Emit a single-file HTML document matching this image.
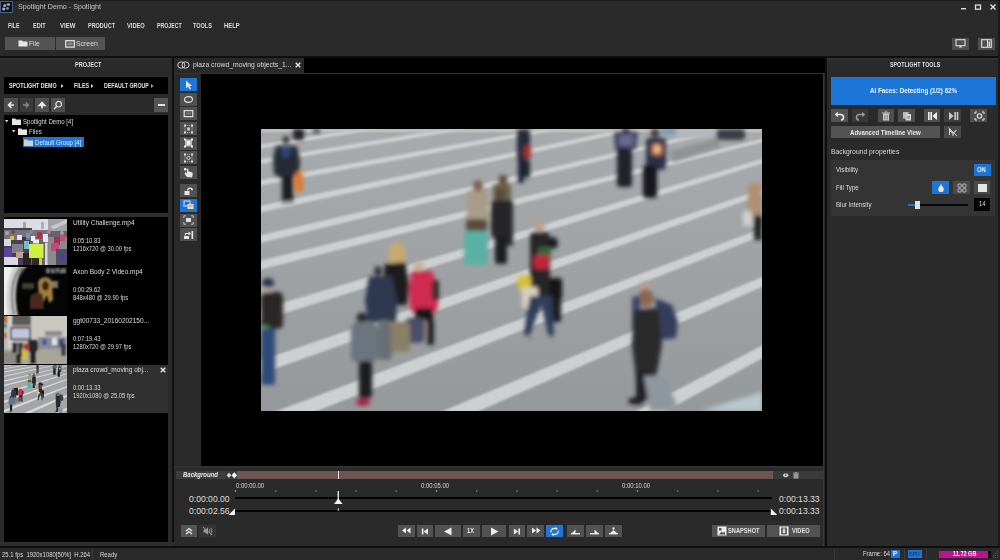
<!DOCTYPE html>
<html><head><meta charset="utf-8">
<style>
*{margin:0;padding:0;box-sizing:border-box}
html,body{width:1000px;height:560px;overflow:hidden;background:#2a2a2a;font-family:"Liberation Sans",sans-serif;color:#ddd;position:relative}
.a{position:absolute}
.b{position:absolute;background:#505050}
.k{position:absolute;background:#000}
.t{position:absolute;white-space:nowrap;line-height:1;transform-origin:0 50%}
svg{position:absolute;overflow:visible}
</style></head><body>
<!-- ===== TITLE BAR ===== -->
<div class="a" style="left:0;top:0;width:1000px;height:1.2px;background:#1c1c1c"></div>
<div class="a" style="left:0;top:58px;width:172px;height:1.5px;background:#303030"></div>
<div class="a" style="left:827px;top:58px;width:171px;height:1.5px;background:#303030"></div>
<div class="a" style="left:0;top:1px;width:13px;height:12px;background:#151310;border:1px solid #43617e"></div>
<svg style="left:0;top:0" width="13" height="13"><g filter="url(#icb)"><circle cx="4.7" cy="5.5" r="1.5" fill="#9aa8c8"/><ellipse cx="8.4" cy="4.6" rx="1.8" ry="1.4" fill="#5cbcf0"/><circle cx="3.8" cy="9" r="1.6" fill="#a8b0d0"/><circle cx="7.5" cy="8.3" r="1.4" fill="#8a90b0"/></g><defs><filter id="icb"><feGaussianBlur stdDeviation="0.5"/></filter></defs></svg>
<div class="t" style="left:18px;top:3px;font-size:7.6px;color:#c4c4c4;transform:scaleX(0.94)">Spotlight Demo - Spotlight</div>
<svg style="left:960px;top:3px" width="40" height="9">
 <rect x="1" y="5" width="5" height="1.4" fill="#ddd"/>
 <rect x="15.5" y="2" width="5" height="4.2" fill="none" stroke="#ddd" stroke-width="1.3"/>
 <path d="M30.5 1.5 L35.5 6.5 M35.5 1.5 L30.5 6.5" stroke="#ddd" stroke-width="1.4"/>
</svg>
<!-- ===== MENU ===== -->
<div class="t" style="left:8px;top:22.5px;font-size:6.5px;font-weight:bold;color:#dcdcdc;transform:scaleX(0.82)">FILE</div>
<div class="t" style="left:33px;top:22.5px;font-size:6.5px;font-weight:bold;color:#dcdcdc;transform:scaleX(0.85)">EDIT</div>
<div class="t" style="left:60px;top:22.5px;font-size:6.5px;font-weight:bold;color:#dcdcdc;transform:scaleX(0.92)">VIEW</div>
<div class="t" style="left:88px;top:22.5px;font-size:6.5px;font-weight:bold;color:#dcdcdc;transform:scaleX(0.84)">PRODUCT</div>
<div class="t" style="left:127px;top:22.5px;font-size:6.5px;font-weight:bold;color:#dcdcdc;transform:scaleX(0.88)">VIDEO</div>
<div class="t" style="left:157px;top:22.5px;font-size:6.5px;font-weight:bold;color:#dcdcdc;transform:scaleX(0.8)">PROJECT</div>
<div class="t" style="left:192.5px;top:22.5px;font-size:6.5px;font-weight:bold;color:#dcdcdc;transform:scaleX(0.85)">TOOLS</div>
<div class="t" style="left:223.5px;top:22.5px;font-size:6.5px;font-weight:bold;color:#dcdcdc;transform:scaleX(0.9)">HELP</div>
<!-- ===== TOOLBAR ===== -->
<div class="b" style="left:5px;top:37px;width:50px;height:13px;background:#535353"></div>
<svg style="left:18px;top:40px" width="10" height="7"><path d="M0.5 0.5h3.5l1 1h4.5v5h-9z" fill="#e6e6e6"/></svg>
<div class="t" style="left:28.5px;top:39.5px;font-size:7.5px;color:#dadada;transform:scaleX(0.9)">File</div>
<div class="b" style="left:56px;top:37px;width:49px;height:13px;background:#535353"></div>
<svg style="left:65px;top:40px" width="10" height="8"><rect x="0.7" y="0.7" width="8.6" height="6.4" fill="none" stroke="#e0e0e0" stroke-width="1.3"/><rect x="2.5" y="2.5" width="5" height="2.8" fill="#888"/></svg>
<div class="t" style="left:75.5px;top:39.5px;font-size:7.5px;color:#dadada;transform:scaleX(0.92)">Screen</div>
<div class="b" style="left:952px;top:37.5px;width:17px;height:12.5px;background:#4e4e4e"></div>
<svg style="left:955px;top:39px" width="11" height="9"><rect x="1" y="0.7" width="9" height="6" fill="none" stroke="#ddd" stroke-width="1.1"/><path d="M3.5 8.5h4l-2-2z" fill="#ddd"/></svg>
<div class="b" style="left:978px;top:37.5px;width:17px;height:12.5px;background:#4e4e4e"></div>
<svg style="left:981px;top:39px" width="11" height="9"><rect x="0.7" y="0.7" width="9.6" height="7.6" fill="none" stroke="#ddd" stroke-width="1.1"/><path d="M6.5 0.7v7.6" stroke="#ddd" stroke-width="1"/><rect x="7.6" y="2.5" width="1.5" height="5" fill="#ddd"/></svg>
<div class="a" style="left:0;top:56px;width:1000px;height:2px;background:#0f0f0f"></div>
<!-- ===== LEFT PANEL ===== -->
<div class="a" style="left:172px;top:58px;width:2px;height:488px;background:#0f0f0f"></div>
<div class="t" style="left:75px;top:61.5px;font-size:6.5px;font-weight:bold;color:#dedede;transform:scaleX(0.86)">PROJECT</div>
<div class="k" style="left:4px;top:77px;width:164px;height:17px"></div>
<div class="t" style="left:9px;top:83px;font-size:6.3px;font-weight:bold;color:#e0e0e0;transform:scaleX(0.84)">SPOTLIGHT DEMO</div>
<svg style="left:60.5px;top:84px" width="3" height="4"><path d="M0 0L2.5 2L0 4z" fill="#ccc"/></svg>
<div class="t" style="left:74px;top:83px;font-size:6.3px;font-weight:bold;color:#e0e0e0;transform:scaleX(0.84)">FILES</div>
<svg style="left:90.5px;top:84px" width="3" height="4"><path d="M0 0L2.5 2L0 4z" fill="#ccc"/></svg>
<div class="t" style="left:103.5px;top:83px;font-size:6.3px;font-weight:bold;color:#e0e0e0;transform:scaleX(0.84)">DEFAULT GROUP</div>
<svg style="left:150.5px;top:84px" width="3" height="4"><path d="M0 0L2.5 2L0 4z" fill="#aaa"/></svg>
<!-- nav buttons -->
<div class="b" style="left:4px;top:98px;width:14px;height:14px;background:#4f4f4f"></div>
<svg style="left:6px;top:100px" width="10" height="10"><path d="M8 5H3M5.5 2.2L2.5 5l3 2.8" stroke="#e8e8e8" stroke-width="1.6" fill="none"/></svg>
<div class="b" style="left:19.5px;top:98px;width:13.5px;height:14px;background:#3b3b3b"></div>
<svg style="left:21px;top:100px" width="10" height="10"><path d="M2 5H7M4.8 2.6L7.4 5l-2.6 2.4" stroke="#8a8a8a" stroke-width="1.3" fill="none"/></svg>
<div class="b" style="left:35px;top:98px;width:14px;height:14px;background:#4f4f4f"></div>
<svg style="left:37px;top:100px" width="10" height="10"><path d="M5 8.5V3.5M2.2 5.5L5 2.5l2.8 3z" stroke="#e8e8e8" stroke-width="1.6" fill="#e8e8e8"/></svg>
<div class="b" style="left:51px;top:98px;width:14px;height:14px;background:#4f4f4f"></div>
<svg style="left:53px;top:100px" width="10" height="10"><circle cx="5.7" cy="4.2" r="2.8" stroke="#e0e0e0" stroke-width="1.2" fill="none"/><path d="M3.7 6.3L1.2 8.9" stroke="#e0e0e0" stroke-width="1.5"/></svg>
<div class="b" style="left:154px;top:98px;width:14px;height:14px;background:#555"></div>
<div class="a" style="left:157.5px;top:104.3px;width:7px;height:1.6px;background:#e0e0e0"></div>
<!-- tree -->
<div class="k" style="left:4px;top:115px;width:164px;height:97.5px"></div>
<svg style="left:5px;top:119.5px" width="4" height="3"><path d="M0 0h3.4L1.7 2.4z" fill="#ddd"/></svg>
<svg style="left:11.5px;top:118px" width="9" height="7"><path d="M0 0.5h3.2l0.8 1h5v5.5h-9z" fill="#e8e8e8"/></svg>
<div class="t" style="left:22.5px;top:117.5px;font-size:7px;color:#dadada;transform:scaleX(0.87)">Spotlight Demo [4]</div>
<svg style="left:12px;top:129.5px" width="4" height="3"><path d="M0 0h3.4L1.7 2.4z" fill="#ddd"/></svg>
<svg style="left:18px;top:128px" width="9" height="7"><path d="M0 0.5h3.2l0.8 1h5v5.5h-9z" fill="#e8e8e8"/></svg>
<div class="t" style="left:29px;top:127.5px;font-size:7px;color:#dadada;transform:scaleX(0.87)">Files</div>
<div class="a" style="left:23px;top:136.5px;width:61px;height:10.5px;background:#1c76d8"></div>
<svg style="left:24px;top:138.5px" width="9" height="7"><path d="M0 0.5h3.2l0.8 1h5v5.5h-9z" fill="#d6d0c4"/></svg>
<div class="t" style="left:35px;top:138.5px;font-size:7px;color:#e8e8e8;transform:scaleX(0.87)">Default Group [4]</div>
<div class="a" style="left:4px;top:212.5px;width:164px;height:4.5px;background:#2e2e2e"></div>
<!-- list -->
<div class="k" style="left:4px;top:217px;width:164px;height:325px"></div>
<div class="a" style="left:4px;top:365px;width:164px;height:48px;background:#303030"></div>
<!-- thumb 1 -->
<svg style="left:4px;top:219px" width="63" height="46" viewBox="0 0 63 46">
 <defs><filter id="bl1" x="-10%" y="-10%" width="120%" height="120%"><feGaussianBlur stdDeviation="0.7"/></filter><clipPath id="c1"><rect width="63" height="46"/></clipPath></defs>
 <g clip-path="url(#c1)"><rect width="63" height="46" fill="#6a6070"/>
 <g filter="url(#bl1)">
 <rect x="-2" y="-2" width="48" height="13" fill="#dadee4"/>
 <rect x="44" y="-2" width="21" height="14" fill="#a0a4a8"/>
 <path d="M46 8L63 0V4L50 10z" fill="#c4c8cc"/>
 <rect x="19" y="3" width="3" height="7" fill="#a0a6ac"/><rect x="37" y="3" width="3" height="7" fill="#aab0b4"/>
 <rect x="-2" y="9" width="30" height="3" fill="#3a4a38"/>
 <rect x="-2" y="11" width="46" height="10" fill="#7a7080"/>
 <rect x="41" y="18" width="24" height="30" fill="#8a8a8e"/>
 <rect x="41" y="24" width="2.5" height="24" fill="#d8d8d8"/>
 <circle cx="3" cy="14" r="2" fill="#b0a0b0"/><circle cx="9" cy="13" r="1.8" fill="#604858"/><circle cx="27" cy="13" r="1.8" fill="#9a8090"/><circle cx="45" cy="13" r="2" fill="#b08098"/><circle cx="58" cy="14" r="2" fill="#c090a8"/>
 <rect x="13" y="16" width="5" height="7" fill="#e0e0e8"/><rect x="39" y="15" width="5" height="8" fill="#e4e4ec"/>
 <rect x="33" y="13" width="5" height="7" fill="#b03040"/><rect x="50" y="18" width="6" height="8" fill="#a03058"/><rect x="56" y="16" width="5" height="6" fill="#c05070"/>
 <rect x="6" y="17" width="4" height="5" fill="#d0c040"/><rect x="22" y="14" width="4" height="5" fill="#60a0c0"/><rect x="18" y="18" width="4" height="5" fill="#403038"/><rect x="27" y="17" width="4" height="5" fill="#f0f0f0"/>
 <rect x="-2" y="21" width="28" height="25" fill="#4a4050"/>
 <rect x="0" y="20" width="7" height="7" fill="#d8d8e0"/>
 <rect x="8" y="25" width="11" height="9" fill="#80808a"/>
 <rect x="-2" y="29" width="10" height="9" fill="#6040a0"/>
 <rect x="-2" y="38" width="16" height="10" fill="#d8d8e0"/>
 <rect x="12" y="33" width="8" height="6" fill="#c0a090"/>
 <rect x="19" y="34" width="8" height="12" fill="#2a2028"/>
 <rect x="20" y="22" width="5" height="8" fill="#70c0c8"/>
 <rect x="25" y="25" width="14.5" height="14" fill="#d0f040"/>
 <rect x="29" y="20.5" width="6" height="4" fill="#e8e8e8"/>
 <rect x="28" y="39" width="9" height="7" fill="#302a28"/>
 <rect x="35" y="38" width="3" height="8" fill="#c0d040"/>
 <rect x="47" y="24" width="8" height="8" fill="#c04880"/>
 <rect x="52" y="30" width="11" height="16" fill="#505060"/>
 <rect x="55" y="35" width="7" height="6" fill="#5040a0"/>
 </g></g>
</svg>
<div class="t" style="left:72.5px;top:219px;font-size:7px;color:#dedede;transform:scaleX(0.93)">Utility Challenge.mp4</div>
<div class="t" style="left:72.5px;top:238px;font-size:6.3px;color:#dadada;transform:scaleX(0.92)">0:05:10.83</div>
<div class="t" style="left:72.5px;top:246px;font-size:6.3px;color:#dadada;transform:scaleX(0.92)">1216x720 @ 30.00 fps</div>
<!-- thumb 2 -->
<svg style="left:4px;top:267px" width="63" height="48" viewBox="0 0 63 48">
 <defs><filter id="bl2" x="-10%" y="-10%" width="120%" height="120%"><feGaussianBlur stdDeviation="0.8"/></filter><clipPath id="c2"><rect width="63" height="48"/></clipPath></defs>
 <g clip-path="url(#c2)"><rect width="63" height="48" fill="#050505"/>
 <g filter="url(#bl2)">
 <path d="M-2 -2H24C13 8 9 26 14 50H-2z" fill="#d0d0d0"/>
 <path d="M-2 -2H10C3 10 1 30 4 50H-2z" fill="#f0f0f0"/>
 <path d="M17 0C8 10 6 28 10 48" stroke="#707070" stroke-width="2.2" fill="none"/>
 <path d="M20 0C12 10 10 28 14 48" stroke="#2a2a2a" stroke-width="1.6" fill="none"/>
 <rect x="18" y="16" width="12" height="6" fill="#3a4034"/>
 <rect x="46" y="14" width="8" height="7" fill="#7a7a68"/>
 <path d="M34 16C35 9 46 8 48 15L49 33L45 36L43 28L39 36L35 30z" fill="#a08040"/>
 <ellipse cx="41.5" cy="19" rx="3.5" ry="5" fill="#3a2418"/>
 <path d="M26 30C29 25 36 24 39 28L40 42H26z" fill="#4a2a1e"/>
 <g fill="#e0e0e0"><rect x="42" y="1.8" width="4" height="1.3"/><rect x="47" y="1.8" width="3" height="1.3"/><rect x="51" y="1.8" width="5" height="1.3"/><rect x="57" y="1.8" width="5" height="1.3"/><rect x="42" y="4.4" width="4" height="1.3"/><rect x="47" y="4.4" width="4" height="1.3"/><rect x="52" y="4.4" width="2" height="1.3"/><rect x="55" y="4.4" width="7" height="1.3"/></g>
 </g></g>
</svg>
<div class="t" style="left:72.5px;top:267.5px;font-size:7px;color:#dedede;transform:scaleX(0.93)">Axon Body 2 Video.mp4</div>
<div class="t" style="left:72.5px;top:286.5px;font-size:6.3px;color:#dadada;transform:scaleX(0.92)">0:00:29.62</div>
<div class="t" style="left:72.5px;top:294.5px;font-size:6.3px;color:#dadada;transform:scaleX(0.92)">848x480 @ 29.90 fps</div>
<!-- thumb 3 -->
<svg style="left:4px;top:316px" width="63" height="48" viewBox="0 0 63 48">
 <defs><filter id="bl3" x="-10%" y="-10%" width="120%" height="120%"><feGaussianBlur stdDeviation="0.8"/></filter><clipPath id="c3"><rect width="63" height="48"/></clipPath></defs>
 <g clip-path="url(#c3)"><rect width="63" height="48" fill="#b8b6ac"/>
 <g filter="url(#bl3)">
 <rect x="27" y="-2" width="38" height="24" fill="#c8c8c0"/>
 <rect x="8" y="-2" width="19" height="13" fill="#5a5a58"/>
 <rect x="8" y="9" width="19" height="4" fill="#a89a88"/>
 <rect x="-2" y="-2" width="7" height="9" fill="#c07030"/>
 <rect x="-2" y="8" width="5" height="4" fill="#4080b0"/><rect x="-2" y="12" width="5" height="3" fill="#c0c040"/><rect x="-2" y="17" width="5" height="5" fill="#c06080"/>
 <rect x="3.5" y="-2" width="4.5" height="37" fill="#d0d0d0"/>
 <rect x="6" y="11" width="21" height="13" fill="#303030"/>
 <rect x="7.5" y="12.5" width="18" height="10" fill="#c0c8e0"/>
 <rect x="41" y="15" width="17" height="5" fill="#8a8a90"/>
 <rect x="34" y="21" width="29" height="12" fill="#8a8a98"/>
 <rect x="38" y="23" width="5" height="6" fill="#4060a0"/><rect x="48" y="22" width="5" height="7" fill="#e0e0e8"/><rect x="55" y="23" width="5" height="8" fill="#404a70"/>
 <rect x="-2" y="33" width="67" height="17" fill="#a8a498"/>
 <rect x="-2" y="36" width="14" height="12" fill="#8a8880"/>
 <rect x="8" y="27" width="5" height="10" fill="#303034"/><rect x="14" y="27" width="5" height="14" fill="#383c48"/>
 <rect x="12" y="38" width="5" height="10" fill="#282828"/>
 <rect x="18" y="33" width="5" height="11" fill="#d0c030"/>
 <rect x="24" y="24" width="10" height="12" fill="#28282c" rx="3"/><rect x="26" y="35" width="6" height="13" fill="#202024"/>
 <rect x="20" y="28" width="5" height="6" fill="#b03030"/>
 <rect x="57" y="28" width="5" height="12" fill="#404048"/>
 </g></g>
</svg>
<div class="t" style="left:72.5px;top:317px;font-size:7px;color:#dedede;transform:scaleX(0.93)">ggt00733_20160202150...</div>
<div class="t" style="left:72.5px;top:335.5px;font-size:6.3px;color:#dadada;transform:scaleX(0.92)">0:07:19.43</div>
<div class="t" style="left:72.5px;top:343.5px;font-size:6.3px;color:#dadada;transform:scaleX(0.92)">1280x720 @ 29.97 fps</div>
<!-- thumb 4 -->
<svg style="left:4px;top:365px;overflow:hidden" width="63" height="48" viewBox="62.6 0 375.8 282" preserveAspectRatio="none">
<defs><filter id="tvb" x="-5%" y="-5%" width="110%" height="110%"><feGaussianBlur stdDeviation="2.5"/></filter>
<clipPath id="tvc"><rect width="501" height="282"/></clipPath></defs>
<g clip-path="url(#tvc)">
<rect width="501" height="282" fill="#a3a6a8"/>
<g fill="#d8dada" filter="url(#tvb)"><path d="M-10 17.2 L511 -68.1 L511 -65.1 L-10 21.1Z"/><path d="M-10 31.9 L511 -54.2 L511 -51.2 L-10 36.4Z"/><path d="M-10 52.9 L511 -42.4 L511 -39.4 L-10 58.4Z"/><path d="M-10 78.8 L511 -31.7 L511 -28.7 L-10 85.5Z"/><path d="M-10 108.4 L511 -12.9 L511 -9.9 L-10 116.3Z"/><path d="M-10 133.9 L511 7.4 L511 10.8 L-10 143.0Z"/><path d="M-10 183.4 L511 27.0 L511 31.3 L-10 194.7Z"/><path d="M-10 234.7 L511 56.7 L511 62.3 L-10 248.3Z"/><path d="M-10 291.8 L511 95.5 L511 102.8 L-10 307.9Z"/><path d="M-10 362.6 L511 143.9 L511 153.5 L-10 382.0Z"/><path d="M-10 483.9 L511 211.4 L511 223.9 L-10 508.8Z"/><path d="M-10 622.0 L511 288.4 L511 304.5 L-10 653.1Z"/></g>
<g filter="url(#tvb)"><ellipse cx="25.0" cy="11.0" rx="3.5" ry="4" fill="#3a3434"/><path d="M15.0 17.0 L36.0 17.0 L39.0 31.0 L38.0 47.0 L32.0 49.0 L20.0 49.0 L13.0 45.0 L12.0 29.0Z" fill="#262a34"/><rect x="21.0" y="18.0" width="8.0" height="10.0" rx="2" fill="#2c4a78"/><rect x="21.0" y="47.0" width="11.0" height="28.0" rx="2" fill="#1e1e22"/><rect x="34.0" y="43.0" width="8.0" height="20.0" rx="3" fill="#e07a2a"/><ellipse cx="27.0" cy="75.0" rx="6" ry="2.5" fill="#b8baba"/><rect x="32.0" y="0.0" width="11.0" height="11.0" rx="3" fill="#222226"/><rect x="52.0" y="0.0" width="7.0" height="4.0" rx="1" fill="#3a3a40"/><rect x="256.0" y="0.0" width="13.0" height="31.0" rx="4" fill="#262c3c"/><rect x="263.0" y="17.0" width="7.0" height="12.0" rx="2" fill="#a03028"/><rect x="257.0" y="29.0" width="6.0" height="25.0" rx="2" fill="#1e2230"/><rect x="263.0" y="31.0" width="6.0" height="18.0" rx="2" fill="#222636"/><ellipse cx="365.0" cy="2.0" rx="4" ry="3" fill="#303030"/><path d="M353.0 3.0 L377.0 3.0 L375.0 20.0 L354.0 20.0Z" fill="#3a4060"/><rect x="358.0" y="6.0" width="14.0" height="11.0" rx="2" fill="#6a6a90"/><rect x="356.0" y="19.0" width="15.0" height="39.0" rx="3" fill="#22242c"/><ellipse cx="394.0" cy="4.0" rx="4.5" ry="4.5" fill="#4a3a40"/><rect x="385.0" y="9.0" width="20.0" height="32.0" rx="4" fill="#2a3248"/><rect x="391.0" y="15.0" width="10.0" height="11.0" rx="2" fill="#d88040"/><rect x="394.0" y="17.0" width="4.0" height="6.0" rx="1" fill="#e8d0c0"/><rect x="382.0" y="36.0" width="14.0" height="33.0" rx="3" fill="#18181c"/><rect x="400.0" y="0.0" width="16.0" height="4.0" rx="1" fill="#5090c0"/><path d="M407.0 23.0 L455.0 9.0 L461.0 17.0 L413.0 33.0Z" fill="#8e9294"/><rect x="415.0" y="0.0" width="41.0" height="9.0" rx="3" fill="#b4b8bc"/><rect x="455.0" y="0.0" width="29.0" height="11.0" rx="4" fill="#3a3e44"/><rect x="487.0" y="54.0" width="14.0" height="34.0" rx="5" fill="#b09070"/><rect x="493.0" y="86.0" width="8.0" height="25.0" rx="2" fill="#202022"/><rect x="482.0" y="82.0" width="9.0" height="15.0" rx="3" fill="#d0d0d0"/><ellipse cx="217.0" cy="57.0" rx="5" ry="6" fill="#7a6050"/><path d="M207.0 62.0 L227.0 62.0 L228.0 91.0 L205.0 91.0Z" fill="#a89c88"/><rect x="205.0" y="90.0" width="21.0" height="13.0" rx="3" fill="#5a4a3a"/><rect x="203.0" y="102.0" width="24.0" height="34.0" rx="3" fill="#5ab0a4"/><ellipse cx="242.0" cy="51.0" rx="4.5" ry="5.5" fill="#605040"/><rect x="232.0" y="55.0" width="18.0" height="17.0" rx="4" fill="#6a6048"/><rect x="246.0" y="71.0" width="6.0" height="46.0" rx="2" fill="#2a2a2a"/><ellipse cx="239.0" cy="65.0" rx="4.5" ry="6" fill="#5a4838"/><rect x="230.0" y="71.0" width="20.0" height="38.0" rx="5" fill="#26282c"/><rect x="234.0" y="107.0" width="12.0" height="28.0" rx="3" fill="#1e1e22"/><ellipse cx="278.5" cy="97.0" rx="5.5" ry="6.5" fill="#b8a090"/><rect x="269.0" y="103.0" width="20.0" height="66.0" rx="5" fill="#262628"/><ellipse cx="292.0" cy="114.0" rx="5" ry="6" fill="#1e1e20"/><rect x="277.0" y="118.0" width="13.0" height="11.0" rx="2" fill="#3a6040"/><rect x="273.0" y="126.0" width="15.0" height="14.0" rx="3" fill="#c02838"/><rect x="288.0" y="149.0" width="13.0" height="22.0" rx="3" fill="#161618"/><rect x="291.0" y="169.0" width="9.0" height="24.0" rx="2" fill="#1e1e22"/><rect x="257.0" y="147.0" width="13.0" height="15.0" rx="3" fill="#d8c030"/><rect x="261.0" y="158.0" width="16.0" height="21.0" rx="3" fill="#d8d0c0"/><path d="M269.0 167.0 L284.0 167.0 L274.0 191.0 L269.0 207.0 L263.0 207.0 L265.0 189.0Z" fill="#2e3e5a"/><path d="M279.0 167.0 L291.0 167.0 L293.0 207.0 L288.0 209.0 L283.0 187.0Z" fill="#2e3e5a"/><ellipse cx="268.0" cy="209.0" rx="5" ry="2.5" fill="#909498"/><ellipse cx="291.0" cy="209.0" rx="4" ry="2" fill="#909498"/><ellipse cx="136.0" cy="126.0" rx="8.5" ry="13" fill="#c8a870"/><path d="M124.0 135.0 L144.0 133.0 L148.0 156.0 L146.0 176.0 L124.0 176.0 L121.0 156.0Z" fill="#1c1c1e"/><ellipse cx="158.0" cy="137.0" rx="5" ry="5" fill="#c8b090"/><path d="M151.0 142.0 L171.0 142.0 L178.0 161.0 L176.0 183.0 L150.0 183.0 L148.0 161.0Z" fill="#d02a50"/><rect x="171.0" y="151.0" width="7.0" height="20.0" rx="2" fill="#2a2a2a"/><rect x="154.0" y="179.0" width="18.0" height="13.0" rx="3" fill="#141414"/><rect x="159.0" y="191.0" width="6.0" height="20.0" rx="2" fill="#c0a090"/><rect x="166.0" y="191.0" width="7.0" height="25.0" rx="2" fill="#222222"/><rect x="144.0" y="189.0" width="20.0" height="25.0" rx="5" fill="#4a5068"/><ellipse cx="117.0" cy="142.0" rx="4" ry="5" fill="#353535"/><path d="M108.0 147.0 L131.0 147.0 L136.0 171.0 L135.0 193.0 L107.0 193.0 L104.0 171.0Z" fill="#2e3850"/><rect x="117.0" y="191.0" width="14.0" height="40.0" rx="4" fill="#6a6e74"/><rect x="130.0" y="193.0" width="19.0" height="30.0" rx="4" fill="#8a8068"/><ellipse cx="101.0" cy="189.0" rx="5.5" ry="5.5" fill="#2a2a2a"/><rect x="90.0" y="193.0" width="27.0" height="41.0" rx="7" fill="#6a7480"/><rect x="98.0" y="232.0" width="13.0" height="37.0" rx="3" fill="#1a1a1e"/><ellipse cx="102.0" cy="273.0" rx="7" ry="4" fill="#a02848"/><ellipse cx="7.0" cy="154.0" rx="6" ry="5" fill="#2a3450"/><rect x="0.0" y="159.0" width="10.0" height="7.0" rx="2" fill="#c0b0a0"/><rect x="0.0" y="163.0" width="22.0" height="37.0" rx="5" fill="#2a2828"/><rect x="1.0" y="197.0" width="7.0" height="13.0" rx="2" fill="#60b040"/><rect x="0.0" y="199.0" width="14.0" height="57.0" rx="3" fill="#2e4a78"/><ellipse cx="384.0" cy="158.0" rx="5" ry="5" fill="#b8a090"/><ellipse cx="385.0" cy="169.0" rx="8" ry="9" fill="#8a6850"/><path d="M394.0 169.0 L411.0 176.0 L417.0 193.0 L415.0 209.0 L399.0 211.0Z" fill="#343e5c"/><rect x="371.0" y="167.0" width="8.0" height="34.0" rx="3" fill="#3a4868"/><path d="M373.0 181.0 L397.0 179.0 L401.0 216.0 L395.0 249.0 L375.0 249.0 L371.0 216.0Z" fill="#2a2a2c"/><rect x="375.0" y="243.0" width="14.0" height="28.0" rx="3" fill="#222226"/><path d="M383.0 247.0 L403.0 247.0 L416.0 276.0 L411.0 282.0 L389.0 282.0Z" fill="#8e969e"/><ellipse cx="375.0" cy="272.0" rx="8" ry="3.5" fill="#1a1a1a"/><path d="M439.0 282.0 L501.0 263.0 L501.0 282.0Z" fill="#b8c8cc"/></g>
</g></svg>
<div class="t" style="left:72.5px;top:366px;font-size:7px;color:#dedede;transform:scaleX(0.93)">plaza crowd_moving obj...</div>
<svg style="left:159.5px;top:367px" width="6" height="6"><path d="M0.7 0.7L5.3 5.3M5.3 0.7L0.7 5.3" stroke="#e8e8e8" stroke-width="1.3"/></svg>
<div class="t" style="left:72.5px;top:385px;font-size:6.3px;color:#dadada;transform:scaleX(0.92)">0:00:13.33</div>
<div class="t" style="left:72.5px;top:393px;font-size:6.3px;color:#dadada;transform:scaleX(0.92)">1920x1080 @ 25.05 fps</div>
<!-- ===== CENTER ===== -->
<div class="k" style="left:174px;top:58px;width:651px;height:15px"></div>
<div class="a" style="left:174px;top:58px;width:130px;height:15px;background:#292929"></div>
<svg style="left:177px;top:61px" width="13" height="8"><ellipse cx="4.3" cy="4" rx="3.6" ry="3.2" fill="none" stroke="#d0d0d0" stroke-width="1"/><ellipse cx="8.5" cy="4" rx="3.6" ry="3.2" fill="none" stroke="#d0d0d0" stroke-width="1"/></svg>
<div class="t" style="left:193px;top:60.5px;font-size:7.3px;color:#dadada;transform:scaleX(0.93)">plaza crowd_moving objects_1...</div>
<svg style="left:295px;top:61.5px" width="6" height="6"><path d="M0.7 0.7L5.3 5.3M5.3 0.7L0.7 5.3" stroke="#e8e8e8" stroke-width="1.3"/></svg>
<div class="a" style="left:174px;top:73px;width:651px;height:1px;background:#333"></div>
<div class="k" style="left:201px;top:74px;width:622px;height:392px"></div>
<div class="a" style="left:823px;top:73px;width:1.4px;height:473px;background:#3a3a3a"></div>
<div class="a" style="left:825px;top:58px;width:2px;height:488px;background:#0f0f0f"></div>
<!-- VIDEO START --><svg style="left:261px;top:129px" width="501" height="282" viewBox="0 0 501 282">
<defs><filter id="vb" x="-5%" y="-5%" width="110%" height="110%"><feGaussianBlur stdDeviation="1.0"/></filter>
<filter id="vb2" x="-20%" y="-20%" width="140%" height="140%"><feGaussianBlur stdDeviation="1.9"/></filter>
<clipPath id="vc"><rect width="501" height="282"/></clipPath>
<linearGradient id="vg" x1="0" y1="0" x2="0" y2="1"><stop offset="0" stop-color="#a8abad"/><stop offset="1" stop-color="#95999c"/></linearGradient></defs>
<g clip-path="url(#vc)">
<rect width="501" height="282" fill="url(#vg)"/>
<g fill="#cdd0d0" filter="url(#vb)"><path d="M-10 17.2 L511 -68.1 L511 -65.1 L-10 21.1Z"/><path d="M-10 31.9 L511 -54.2 L511 -51.2 L-10 36.4Z"/><path d="M-10 52.9 L511 -42.4 L511 -39.4 L-10 58.4Z"/><path d="M-10 78.8 L511 -31.7 L511 -28.7 L-10 85.5Z"/><path d="M-10 108.4 L511 -12.9 L511 -9.9 L-10 116.3Z"/><path d="M-10 133.9 L511 7.4 L511 10.8 L-10 143.0Z"/><path d="M-10 183.4 L511 27.0 L511 31.3 L-10 194.7Z"/><path d="M-10 234.7 L511 56.7 L511 62.3 L-10 248.3Z"/><path d="M-10 291.8 L511 95.5 L511 102.8 L-10 307.9Z"/><path d="M-10 362.6 L511 143.9 L511 153.5 L-10 382.0Z"/><path d="M-10 483.9 L511 211.4 L511 223.9 L-10 508.8Z"/><path d="M-10 622.0 L511 288.4 L511 304.5 L-10 653.1Z"/></g>
<rect x="0" y="0" width="501" height="3" fill="#c8c4be" filter="url(#vb)"/>
<g filter="url(#vb2)"><ellipse cx="25.0" cy="11.0" rx="3.5" ry="4" fill="#3a3434"/><path d="M15.0 17.0 L36.0 17.0 L39.0 31.0 L38.0 47.0 L32.0 49.0 L20.0 49.0 L13.0 45.0 L12.0 29.0Z" fill="#262a34"/><rect x="21.0" y="18.0" width="8.0" height="10.0" rx="2" fill="#2c4a78"/><rect x="21.0" y="47.0" width="11.0" height="28.0" rx="2" fill="#1e1e22"/><rect x="34.0" y="43.0" width="8.0" height="20.0" rx="3" fill="#e07a2a"/><ellipse cx="27.0" cy="75.0" rx="6" ry="2.5" fill="#b8baba"/><rect x="32.0" y="0.0" width="11.0" height="11.0" rx="3" fill="#222226"/><rect x="52.0" y="0.0" width="7.0" height="4.0" rx="1" fill="#3a3a40"/><rect x="256.0" y="0.0" width="13.0" height="31.0" rx="4" fill="#262c3c"/><rect x="263.0" y="17.0" width="7.0" height="12.0" rx="2" fill="#a03028"/><rect x="257.0" y="29.0" width="6.0" height="25.0" rx="2" fill="#1e2230"/><rect x="263.0" y="31.0" width="6.0" height="18.0" rx="2" fill="#222636"/><ellipse cx="365.0" cy="2.0" rx="4" ry="3" fill="#303030"/><path d="M353.0 3.0 L377.0 3.0 L375.0 20.0 L354.0 20.0Z" fill="#3a4060"/><rect x="358.0" y="6.0" width="14.0" height="11.0" rx="2" fill="#6a6a90"/><rect x="356.0" y="19.0" width="15.0" height="39.0" rx="3" fill="#22242c"/><ellipse cx="394.0" cy="4.0" rx="4.5" ry="4.5" fill="#4a3a40"/><rect x="385.0" y="9.0" width="20.0" height="32.0" rx="4" fill="#2a3248"/><rect x="391.0" y="15.0" width="10.0" height="11.0" rx="2" fill="#d88040"/><rect x="394.0" y="17.0" width="4.0" height="6.0" rx="1" fill="#e8d0c0"/><rect x="382.0" y="36.0" width="14.0" height="33.0" rx="3" fill="#18181c"/><rect x="400.0" y="0.0" width="16.0" height="4.0" rx="1" fill="#5090c0"/><path d="M407.0 23.0 L455.0 9.0 L461.0 17.0 L413.0 33.0Z" fill="#8e9294"/><rect x="415.0" y="0.0" width="41.0" height="9.0" rx="3" fill="#b4b8bc"/><rect x="455.0" y="0.0" width="29.0" height="11.0" rx="4" fill="#3a3e44"/><rect x="487.0" y="54.0" width="14.0" height="34.0" rx="5" fill="#b09070"/><rect x="493.0" y="86.0" width="8.0" height="25.0" rx="2" fill="#202022"/><rect x="482.0" y="82.0" width="9.0" height="15.0" rx="3" fill="#d0d0d0"/><ellipse cx="217.0" cy="57.0" rx="5" ry="6" fill="#7a6050"/><path d="M207.0 62.0 L227.0 62.0 L228.0 91.0 L205.0 91.0Z" fill="#a89c88"/><rect x="205.0" y="90.0" width="21.0" height="13.0" rx="3" fill="#5a4a3a"/><rect x="203.0" y="102.0" width="24.0" height="34.0" rx="3" fill="#5ab0a4"/><ellipse cx="242.0" cy="51.0" rx="4.5" ry="5.5" fill="#605040"/><rect x="232.0" y="55.0" width="18.0" height="17.0" rx="4" fill="#6a6048"/><rect x="246.0" y="71.0" width="6.0" height="46.0" rx="2" fill="#2a2a2a"/><ellipse cx="239.0" cy="65.0" rx="4.5" ry="6" fill="#5a4838"/><rect x="230.0" y="71.0" width="20.0" height="38.0" rx="5" fill="#26282c"/><rect x="234.0" y="107.0" width="12.0" height="28.0" rx="3" fill="#1e1e22"/><ellipse cx="278.5" cy="97.0" rx="5.5" ry="6.5" fill="#b8a090"/><rect x="269.0" y="103.0" width="20.0" height="66.0" rx="5" fill="#262628"/><ellipse cx="292.0" cy="114.0" rx="5" ry="6" fill="#1e1e20"/><rect x="277.0" y="118.0" width="13.0" height="11.0" rx="2" fill="#3a6040"/><rect x="273.0" y="126.0" width="15.0" height="14.0" rx="3" fill="#c02838"/><rect x="288.0" y="149.0" width="13.0" height="22.0" rx="3" fill="#161618"/><rect x="291.0" y="169.0" width="9.0" height="24.0" rx="2" fill="#1e1e22"/><rect x="257.0" y="147.0" width="13.0" height="15.0" rx="3" fill="#d8c030"/><rect x="261.0" y="158.0" width="16.0" height="21.0" rx="3" fill="#d8d0c0"/><path d="M269.0 167.0 L284.0 167.0 L274.0 191.0 L269.0 207.0 L263.0 207.0 L265.0 189.0Z" fill="#2e3e5a"/><path d="M279.0 167.0 L291.0 167.0 L293.0 207.0 L288.0 209.0 L283.0 187.0Z" fill="#2e3e5a"/><ellipse cx="268.0" cy="209.0" rx="5" ry="2.5" fill="#909498"/><ellipse cx="291.0" cy="209.0" rx="4" ry="2" fill="#909498"/><ellipse cx="136.0" cy="126.0" rx="8.5" ry="13" fill="#c8a870"/><path d="M124.0 135.0 L144.0 133.0 L148.0 156.0 L146.0 176.0 L124.0 176.0 L121.0 156.0Z" fill="#1c1c1e"/><ellipse cx="158.0" cy="137.0" rx="5" ry="5" fill="#c8b090"/><path d="M151.0 142.0 L171.0 142.0 L178.0 161.0 L176.0 183.0 L150.0 183.0 L148.0 161.0Z" fill="#d02a50"/><rect x="171.0" y="151.0" width="7.0" height="20.0" rx="2" fill="#2a2a2a"/><rect x="154.0" y="179.0" width="18.0" height="13.0" rx="3" fill="#141414"/><rect x="159.0" y="191.0" width="6.0" height="20.0" rx="2" fill="#c0a090"/><rect x="166.0" y="191.0" width="7.0" height="25.0" rx="2" fill="#222222"/><rect x="144.0" y="189.0" width="20.0" height="25.0" rx="5" fill="#4a5068"/><ellipse cx="117.0" cy="142.0" rx="4" ry="5" fill="#353535"/><path d="M108.0 147.0 L131.0 147.0 L136.0 171.0 L135.0 193.0 L107.0 193.0 L104.0 171.0Z" fill="#2e3850"/><rect x="117.0" y="191.0" width="14.0" height="40.0" rx="4" fill="#6a6e74"/><rect x="130.0" y="193.0" width="19.0" height="30.0" rx="4" fill="#8a8068"/><ellipse cx="101.0" cy="189.0" rx="5.5" ry="5.5" fill="#2a2a2a"/><rect x="90.0" y="193.0" width="27.0" height="41.0" rx="7" fill="#6a7480"/><rect x="98.0" y="232.0" width="13.0" height="37.0" rx="3" fill="#1a1a1e"/><ellipse cx="102.0" cy="273.0" rx="7" ry="4" fill="#a02848"/><ellipse cx="7.0" cy="154.0" rx="6" ry="5" fill="#2a3450"/><rect x="0.0" y="159.0" width="10.0" height="7.0" rx="2" fill="#c0b0a0"/><rect x="0.0" y="163.0" width="22.0" height="37.0" rx="5" fill="#2a2828"/><rect x="1.0" y="197.0" width="7.0" height="13.0" rx="2" fill="#60b040"/><rect x="0.0" y="199.0" width="14.0" height="57.0" rx="3" fill="#2e4a78"/><ellipse cx="384.0" cy="158.0" rx="5" ry="5" fill="#b8a090"/><ellipse cx="385.0" cy="169.0" rx="8" ry="9" fill="#8a6850"/><path d="M394.0 169.0 L411.0 176.0 L417.0 193.0 L415.0 209.0 L399.0 211.0Z" fill="#343e5c"/><rect x="371.0" y="167.0" width="8.0" height="34.0" rx="3" fill="#3a4868"/><path d="M373.0 181.0 L397.0 179.0 L401.0 216.0 L395.0 249.0 L375.0 249.0 L371.0 216.0Z" fill="#2a2a2c"/><rect x="375.0" y="243.0" width="14.0" height="28.0" rx="3" fill="#222226"/><path d="M383.0 247.0 L403.0 247.0 L416.0 276.0 L411.0 282.0 L389.0 282.0Z" fill="#8e969e"/><ellipse cx="375.0" cy="272.0" rx="8" ry="3.5" fill="#1a1a1a"/><path d="M439.0 282.0 L501.0 263.0 L501.0 282.0Z" fill="#b8c8cc"/></g>
</g></svg><!-- VIDEO END -->
<!-- tool buttons -->
<div class="a" style="left:180px;top:78px;width:17px;height:13px;background:#1c76d8"></div>
<svg style="left:185px;top:79.5px" width="8" height="10"><path d="M1 0.5V8.5L3 6.5L4.6 9.5L6 8.8L4.6 6H7.2z" fill="#e8e0d0"/></svg>
<div class="b" style="left:180px;top:92.7px;width:17px;height:13px"></div>
<svg style="left:183px;top:94.5px" width="11" height="9"><ellipse cx="5.5" cy="4.5" rx="4" ry="2.8" fill="none" stroke="#e0e0e0" stroke-width="1.2"/></svg>
<div class="b" style="left:180px;top:107.4px;width:17px;height:13px"></div>
<svg style="left:183px;top:109px" width="11" height="9"><rect x="1.2" y="1.6" width="8.6" height="6" fill="none" stroke="#e0e0e0" stroke-width="1.2"/><rect x="3" y="3.5" width="5" height="2" fill="#777"/></svg>
<div class="b" style="left:180px;top:122px;width:17px;height:13px"></div>
<svg style="left:183px;top:123.5px" width="11" height="10"><rect x="2" y="1.5" width="7" height="7" fill="none" stroke="#ccc" stroke-width="0.8" stroke-dasharray="1 1"/><rect x="4.3" y="3.5" width="2.4" height="3" fill="#ddd"/><rect x="1" y="0.5" width="2" height="2" fill="#ddd"/><rect x="8" y="0.5" width="2" height="2" fill="#ddd"/><rect x="1" y="7.5" width="2" height="2" fill="#ddd"/><rect x="8" y="7.5" width="2" height="2" fill="#ddd"/></svg>
<div class="b" style="left:180px;top:136.5px;width:17px;height:13px"></div>
<svg style="left:183px;top:138px" width="11" height="10"><rect x="2" y="1.5" width="7" height="7" fill="#bbb"/><rect x="4" y="3" width="3" height="4" fill="#eee"/><rect x="1" y="0.5" width="2" height="2" fill="#eee"/><rect x="8" y="0.5" width="2" height="2" fill="#eee"/><rect x="1" y="7.5" width="2" height="2" fill="#eee"/><rect x="8" y="7.5" width="2" height="2" fill="#eee"/></svg>
<div class="b" style="left:180px;top:151px;width:17px;height:13px"></div>
<svg style="left:183px;top:152.5px" width="11" height="10"><rect x="2" y="1.5" width="7" height="7" fill="none" stroke="#ccc" stroke-width="0.8" stroke-dasharray="1 1"/><circle cx="5.5" cy="5" r="1.6" fill="none" stroke="#ddd" stroke-width="0.9"/><rect x="1" y="0.5" width="2" height="2" fill="#ddd"/><rect x="8" y="0.5" width="2" height="2" fill="#ddd"/><rect x="1" y="7.5" width="2" height="2" fill="#ddd"/><rect x="8" y="7.5" width="2" height="2" fill="#ddd"/></svg>
<div class="b" style="left:180px;top:165.8px;width:17px;height:13px"></div>
<svg style="left:183px;top:167px" width="11" height="11"><path d="M4 10C2 8 1.5 6.5 2 5.5C2.6 5 3.4 5.6 4 6.4V2.2C4 1.2 5.3 1.2 5.3 2.2V5C5.5 4 6.8 4.2 6.8 5.2C7 4.5 8.3 4.7 8.3 5.6C8.6 5 9.6 5.3 9.6 6.2V8C9.6 9.4 9 10 8.5 10.5z" fill="#e6e6e6"/><circle cx="2.2" cy="2.2" r="1.2" fill="#fff"/></svg>
<div class="b" style="left:180px;top:184.3px;width:17px;height:13px"></div>
<svg style="left:183px;top:185.5px" width="11" height="10"><rect x="1.5" y="5" width="5" height="4" fill="#e6e6e6"/><path d="M4.5 4.5C4.5 2 8.5 1.2 9 3.8" stroke="#e6e6e6" stroke-width="1.3" fill="none"/><path d="M7.6 4.2L10 4.2L9.2 2z" fill="#e6e6e6"/></svg>
<div class="a" style="left:180px;top:198.8px;width:17px;height:13px;background:#1c76d8"></div>
<svg style="left:183px;top:200px" width="11" height="10"><rect x="1" y="1" width="6" height="5" fill="none" stroke="#e0e6f0" stroke-width="1"/><rect x="4.5" y="4" width="6" height="5" fill="#f0d8b0"/><rect x="5.5" y="5.5" width="4" height="0.8" fill="#b09070"/></svg>
<div class="b" style="left:180px;top:213.5px;width:17px;height:13px"></div>
<svg style="left:183px;top:215px" width="11" height="10"><rect x="3" y="3" width="5" height="4" fill="#e0e0e0"/><path d="M0.8 3V0.8H3M8 0.8H10.2V3M10.2 7V9.2H8M3 9.2H0.8V7" stroke="#ccc" stroke-width="0.9" fill="none"/></svg>
<div class="b" style="left:180px;top:228px;width:17px;height:13px"></div>
<svg style="left:183px;top:229.5px" width="11" height="10"><rect x="1" y="6" width="5" height="3" fill="#e6e6e6"/><path d="M2.5 5.5V3.5H6" stroke="#e6e6e6" stroke-width="1.2" fill="none"/><path d="M5.5 1.5L8 3.5L5.5 5.5z" fill="#e6e6e6"/><rect x="8.5" y="1" width="1.6" height="8" fill="#e6e6e6"/></svg>
<!-- ===== TIMELINE ===== -->
<div class="a" style="left:174px;top:466px;width:650px;height:1.5px;background:#323232"></div>
<div class="a" style="left:176px;top:470.7px;width:647px;height:8.6px;background:#3a3a3a"></div>
<div class="a" style="left:176px;top:470.7px;width:49px;height:8.6px;background:#3d3d3d"></div>
<div class="t" style="left:183px;top:472px;font-size:6.3px;font-weight:bold;font-style:italic;color:#e8e8e8;transform:scaleX(0.95)">Background</div>
<svg style="left:226px;top:471.5px" width="12" height="7"><path d="M3 0.8L5.4 3.3L3 5.8L0.6 3.3z" fill="#dcdcdc"/><path d="M8.3 0.2L11 3.3L8.3 6.4L5.6 3.3z" fill="#fafafa"/></svg>
<div class="a" style="left:237px;top:470.7px;width:535.5px;height:8.6px;background:#6e5553"></div>
<div class="a" style="left:337.6px;top:470.7px;width:1.3px;height:8.6px;background:#e8e0e0"></div>
<svg style="left:782px;top:472px" width="20" height="7"><path d="M0.8 3.3C2.2 0.8 5.2 0.8 6.6 3.3C5.2 5.8 2.2 5.8 0.8 3.3z" fill="#e8e8e8"/><circle cx="3.7" cy="3.3" r="1" fill="#555"/><rect x="11.5" y="1.6" width="5" height="5" fill="#9a9a9a"/><rect x="11" y="0.6" width="6" height="1" fill="#9a9a9a"/><rect x="13" y="0" width="2" height="0.8" fill="#9a9a9a"/></svg>
<!-- ruler -->
<div class="t" style="left:235.5px;top:483px;font-size:6.6px;color:#dadada;transform:scaleX(0.9)">0:00:00.00</div>
<div class="t" style="left:420.8px;top:483px;font-size:6.6px;color:#dadada;transform:scaleX(0.9)">0:00:05.00</div>
<div class="t" style="left:621.8px;top:483px;font-size:6.6px;color:#dadada;transform:scaleX(0.9)">0:00:10.00</div>
<svg style="left:230px;top:489px" width="540" height="4"><circle cx="5.5" cy="2" r="0.8" fill="#bbb"/><circle cx="45.7" cy="2" r="0.8" fill="#8a8a8a"/><circle cx="85.9" cy="2" r="0.8" fill="#8a8a8a"/><circle cx="126.1" cy="2" r="0.8" fill="#8a8a8a"/><circle cx="166.3" cy="2" r="0.8" fill="#8a8a8a"/><circle cx="206.5" cy="2" r="0.8" fill="#bbb"/><circle cx="246.7" cy="2" r="0.8" fill="#8a8a8a"/><circle cx="286.9" cy="2" r="0.8" fill="#8a8a8a"/><circle cx="327.1" cy="2" r="0.8" fill="#8a8a8a"/><circle cx="367.3" cy="2" r="0.8" fill="#8a8a8a"/><circle cx="407.5" cy="2" r="0.8" fill="#bbb"/><circle cx="447.7" cy="2" r="0.8" fill="#8a8a8a"/><circle cx="487.9" cy="2" r="0.8" fill="#8a8a8a"/><circle cx="528.1" cy="2" r="0.8" fill="#8a8a8a"/></svg>
<div class="k" style="left:235px;top:497px;width:537px;height:2px;background:#050505"></div>
<div class="k" style="left:235px;top:510px;width:537px;height:2px;background:#050505"></div>
<div class="t" style="left:189px;top:494.5px;font-size:8.6px;color:#dedede;transform:scaleX(1.0)">0:00:00.00</div>
<div class="t" style="left:189px;top:507px;font-size:8.6px;color:#dedede;transform:scaleX(1.0)">0:00:02.56</div>
<div class="t" style="left:779px;top:494.5px;font-size:8.6px;color:#dedede;transform:scaleX(1.0)">0:00:13.33</div>
<div class="t" style="left:779px;top:507px;font-size:8.6px;color:#dedede;transform:scaleX(1.0)">0:00:13.33</div>
<svg style="left:228px;top:505px" width="8" height="11"><path d="M7 3.5V10H0.5z" fill="#f0f0f0"/></svg>
<svg style="left:770px;top:505px" width="8" height="11"><path d="M0.8 3.5V10H7.3z" fill="#f0f0f0"/></svg>
<svg style="left:333px;top:490px" width="11" height="24"><rect x="4.6" y="1" width="1.3" height="9" fill="#f0f0f0"/><path d="M5.25 8.5L9.5 14H1z" fill="#f4f4f4"/><rect x="4.8" y="18" width="1" height="3" fill="#bbb"/></svg>
<!-- bottom-left buttons -->
<div class="b" style="left:181px;top:524.5px;width:16px;height:12.5px;background:#555"></div>
<svg style="left:184px;top:526px" width="10" height="10"><path d="M2 5L5 2.5L8 5M2 8L5 5.5L8 8" stroke="#eee" stroke-width="1.3" fill="none"/></svg>
<div class="b" style="left:199px;top:524.5px;width:16.5px;height:12.5px;background:#363636"></div>
<svg style="left:202px;top:526px" width="11" height="10"><path d="M1.5 3.5H3.5L6 1.2V8.8L3.5 6.5H1.5z" fill="#9a9a9a"/><path d="M7.2 3C8.2 4 8.2 6 7.2 7M8.6 1.8C10.2 3.5 10.2 6.5 8.6 8.2" stroke="#9a9a9a" stroke-width="0.9" fill="none"/><path d="M1 1L10 9" stroke="#9a9a9a" stroke-width="1"/></svg>
<!-- transport -->
<div class="b" style="left:398px;top:524.5px;width:16.5px;height:12.5px;background:#525252"></div>
<svg style="left:401px;top:527px" width="11" height="7"><path d="M1 3.5L5 0.5V6.5zM5.5 3.5L9.5 0.5V6.5z" fill="#eee"/></svg>
<div class="b" style="left:416.6px;top:524.5px;width:16.6px;height:12.5px;background:#525252"></div>
<svg style="left:421px;top:527.5px" width="8" height="7"><rect x="0.8" y="0.5" width="1.6" height="6" fill="#eee"/><path d="M2.6 3.5L7 0.5V6.5z" fill="#eee"/></svg>
<div class="b" style="left:435.4px;top:524.5px;width:25.2px;height:12.5px;background:#525252"></div>
<svg style="left:443px;top:526.5px" width="10" height="9"><path d="M1 4.5L8.5 0.5V8.5z" fill="#eee"/></svg>
<div class="b" style="left:462.8px;top:524.5px;width:16.8px;height:12.5px;background:#525252"></div>
<div class="t" style="left:467px;top:527.5px;font-size:6.3px;font-weight:bold;color:#e8e8e8;transform:scaleX(0.9)">1X</div>
<div class="b" style="left:481.6px;top:524.5px;width:24.8px;height:12.5px;background:#525252"></div>
<svg style="left:489.5px;top:526.5px" width="10" height="9"><path d="M1 0.5L8.5 4.5L1 8.5z" fill="#eee"/></svg>
<div class="b" style="left:508.8px;top:524.5px;width:16.4px;height:12.5px;background:#525252"></div>
<svg style="left:513px;top:527.5px" width="8" height="7"><path d="M0.8 0.5L5.2 3.5L0.8 6.5z" fill="#eee"/><rect x="5.4" y="0.5" width="1.6" height="6" fill="#eee"/></svg>
<div class="b" style="left:527.4px;top:524.5px;width:16.6px;height:12.5px;background:#525252"></div>
<svg style="left:531px;top:527px" width="11" height="7"><path d="M1 0.5L5 3.5L1 6.5zM5.5 0.5L9.5 3.5L5.5 6.5z" fill="#eee"/></svg>
<div class="a" style="left:546px;top:524.5px;width:17px;height:12.5px;background:#1c76d8"></div>
<svg style="left:549px;top:526.5px" width="11" height="9"><path d="M2 5.5C1.5 3 3 1.5 5 1.5H7.5M9 3.5C9.5 6 8 7.5 6 7.5H3.5" stroke="#f0e0b8" stroke-width="1.3" fill="none"/><path d="M6.8 0L8.8 1.5L6.8 3z M4.2 6L2.2 7.5L4.2 9z" fill="#f0e0b8"/></svg>
<div class="b" style="left:567px;top:524.5px;width:17px;height:12.5px;background:#525252"></div>
<svg style="left:570px;top:527.5px" width="11" height="7"><path d="M1 6L5.5 1.5V6z" fill="#eee"/><rect x="1" y="5" width="9" height="1.4" fill="#eee"/></svg>
<div class="b" style="left:586px;top:524.5px;width:16.6px;height:12.5px;background:#525252"></div>
<svg style="left:589px;top:527.5px" width="11" height="7"><path d="M10 6L5.5 1.5V6z" fill="#eee"/><rect x="1" y="5" width="9" height="1.4" fill="#eee"/></svg>
<div class="b" style="left:605px;top:524.5px;width:16.6px;height:12.5px;background:#525252"></div>
<svg style="left:608px;top:526.5px" width="11" height="8"><path d="M1 7L5.5 3L10 7z" fill="#eee"/><rect x="4.5" y="0.5" width="2" height="2" fill="#eee"/><rect x="1" y="6" width="9" height="1.4" fill="#eee"/></svg>
<div class="b" style="left:712px;top:524.5px;width:53px;height:12.5px;background:#525252"></div>
<svg style="left:716.5px;top:526px" width="10" height="10"><rect x="0.5" y="0.5" width="9" height="9" fill="#eee"/><rect x="2" y="2" width="2.5" height="2.5" fill="#555"/><path d="M2 8.5L4.5 5.5L6 7L7.2 5.5L8.5 8.5z" fill="#555"/></svg>
<div class="t" style="left:728px;top:527.5px;font-size:6.6px;font-weight:bold;color:#e0e0e0;transform:scaleX(0.86)">SNAPSHOT</div>
<div class="b" style="left:767.4px;top:524.5px;width:53px;height:12.5px;background:#525252"></div>
<svg style="left:779px;top:526px" width="10" height="10"><rect x="0.5" y="0.5" width="9" height="9" fill="#eee"/><rect x="2" y="1.5" width="6" height="7" fill="#666"/><rect x="4.2" y="2.5" width="1.6" height="3" fill="#eee"/><path d="M3.2 5.5H6.8L5 7.5z" fill="#eee"/></svg>
<div class="t" style="left:792px;top:527.5px;font-size:6.6px;font-weight:bold;color:#e0e0e0;transform:scaleX(0.86)">VIDEO</div>
<!-- ===== RIGHT PANEL ===== -->
<div class="a" style="left:998px;top:0;width:2px;height:546px;background:#1a1a1a"></div>
<div class="t" style="left:889.5px;top:61.5px;font-size:6.5px;font-weight:bold;color:#dedede;transform:scaleX(0.82)">SPOTLIGHT TOOLS</div>
<div class="a" style="left:831px;top:77px;width:164.5px;height:28px;background:#1c76d8"></div>
<div class="t" style="left:869.5px;top:87px;font-size:7.3px;font-weight:bold;color:#f0f4fa;transform:scaleX(0.86)">AI Faces: Detecting (1/2) 62%</div>
<!-- row 1 -->
<div class="b" style="left:831px;top:109px;width:17px;height:12.5px;background:#535353"></div>
<svg style="left:834px;top:110.5px" width="11" height="10"><path d="M3 3.5H6.5C8.5 3.5 9.5 5 9.5 6.5C9.5 8 8.5 9 7 9" stroke="#eee" stroke-width="1.5" fill="none"/><path d="M0.8 3.5L3.8 0.8V6.2z" fill="#eee"/></svg>
<div class="b" style="left:851.8px;top:109px;width:16.6px;height:12.5px;background:#383838"></div>
<svg style="left:855px;top:110.5px" width="11" height="10"><path d="M8 3.5H4.5C2.5 3.5 1.5 5 1.5 6.5C1.5 8 2.5 9 4 9" stroke="#9a9a9a" stroke-width="1.4" fill="none"/><path d="M10.2 3.5L7.2 0.8V6.2z" fill="#9a9a9a"/></svg>
<div class="b" style="left:877.5px;top:109px;width:16.6px;height:12.5px;background:#4e4e4e"></div>
<svg style="left:882px;top:110.5px" width="8" height="10"><rect x="1" y="2.5" width="6" height="7" fill="#c8c8c8"/><rect x="0" y="1.5" width="8" height="1" fill="#c8c8c8"/><rect x="2.8" y="0.3" width="2.4" height="1" fill="#c8c8c8"/><rect x="2.5" y="4" width="0.8" height="4.5" fill="#666"/><rect x="4.7" y="4" width="0.8" height="4.5" fill="#666"/></svg>
<div class="b" style="left:898.4px;top:109px;width:16.8px;height:12.5px;background:#4e4e4e"></div>
<svg style="left:902px;top:110.5px" width="10" height="10"><rect x="1" y="1" width="5.5" height="6.5" fill="#bbb"/><rect x="3.5" y="3" width="5.5" height="6.5" fill="#d8d8d8"/><rect x="4.5" y="5" width="3.5" height="0.7" fill="#777"/><rect x="4.5" y="6.6" width="3.5" height="0.7" fill="#777"/></svg>
<div class="b" style="left:923.8px;top:109px;width:16.6px;height:12.5px;background:#4e4e4e"></div>
<svg style="left:926.5px;top:110.5px" width="11" height="10"><rect x="1" y="1" width="1.6" height="8" fill="#eee"/><rect x="3.4" y="1" width="1.6" height="8" fill="#eee"/><path d="M10 1V9L5.3 5z" fill="#eee"/></svg>
<div class="b" style="left:944.4px;top:109px;width:16.9px;height:12.5px;background:#3f3f3f"></div>
<svg style="left:947.5px;top:110.5px" width="11" height="10"><path d="M1 1V9L5.7 5z" fill="#c8c8c8"/><rect x="6.3" y="1" width="1.6" height="8" fill="#c8c8c8"/><rect x="8.7" y="1" width="1.6" height="8" fill="#c8c8c8"/></svg>
<div class="b" style="left:970.4px;top:109px;width:16.6px;height:12.5px;background:#4e4e4e"></div>
<svg style="left:973.5px;top:110.5px" width="11" height="10"><circle cx="5.5" cy="5" r="2.2" fill="none" stroke="#e6e6e6" stroke-width="1.1"/><path d="M1 3V1H3M8 1H10V3M10 7V9H8M3 9H1V7" stroke="#e6e6e6" stroke-width="1" fill="none"/></svg>
<!-- row 2 -->
<div class="b" style="left:831px;top:125.7px;width:109.4px;height:12.3px;background:#535353"></div>
<div class="t" style="left:849.5px;top:128.5px;font-size:7px;font-weight:bold;color:#e8e8e8;transform:scaleX(0.87)">Advanced Timeline View</div>
<div class="b" style="left:944.4px;top:125.7px;width:16.9px;height:12.3px;background:#4a4a4a"></div>
<svg style="left:948px;top:127px" width="10" height="10"><path d="M1.5 1.5V8M1.5 3L5 6.5L8.5 3M5 6.5V9" stroke="#d0d0d0" stroke-width="1.1" fill="none"/><path d="M0.5 0.5L9 9" stroke="#d0d0d0" stroke-width="0.9"/></svg>
<div class="t" style="left:831px;top:147.5px;font-size:7.3px;color:#dadada;transform:scaleX(0.93)">Background properties</div>
<!-- properties box -->
<div class="a" style="left:831px;top:160px;width:163.5px;height:55.5px;background:#343434"></div>
<div class="t" style="left:835.5px;top:167px;font-size:6.6px;color:#dedede;transform:scaleX(0.93)">Visibility</div>
<div class="a" style="left:973.7px;top:163.7px;width:17px;height:12.4px;background:#1c76d8"></div>
<div class="t" style="left:977px;top:167px;font-size:6.6px;font-weight:bold;color:#f0f0f0;transform:scaleX(0.9)">ON</div>
<div class="t" style="left:836px;top:184.5px;font-size:6.6px;color:#dedede;transform:scaleX(0.93)">Fill Type</div>
<div class="a" style="left:932px;top:181px;width:17px;height:12.9px;background:#1c76d8"></div>
<svg style="left:936.5px;top:182.5px" width="8" height="10"><path d="M4 1C5 3 6.8 4.6 6.8 6.4C6.8 8 5.6 9 4 9C2.4 9 1.2 8 1.2 6.4C1.2 4.6 3 3 4 1z" fill="#f0e6d6"/></svg>
<div class="b" style="left:953px;top:181px;width:16.6px;height:12.9px;background:#4a4a4a"></div>
<svg style="left:956.5px;top:182.5px" width="10" height="10"><rect x="1" y="1" width="3.3" height="3.3" rx="1" fill="none" stroke="#c8c8c8" stroke-width="0.9"/><rect x="5.7" y="1" width="3.3" height="3.3" rx="1" fill="none" stroke="#c8c8c8" stroke-width="0.9"/><rect x="1" y="5.7" width="3.3" height="3.3" rx="1" fill="none" stroke="#c8c8c8" stroke-width="0.9"/><rect x="5.7" y="5.7" width="3.3" height="3.3" rx="1" fill="none" stroke="#c8c8c8" stroke-width="0.9"/></svg>
<div class="b" style="left:973.9px;top:181px;width:16.6px;height:12.9px;background:#4a4a4a"></div>
<div class="a" style="left:977.5px;top:183.5px;width:9.5px;height:8.5px;background:#e6e6e6"></div>
<div class="t" style="left:836px;top:201.5px;font-size:6.6px;color:#dedede;transform:scaleX(0.93)">Blur Intensity</div>
<div class="a" style="left:908px;top:204.2px;width:7px;height:1.6px;background:#1c76d8"></div>
<div class="a" style="left:920px;top:204.2px;width:48px;height:1.6px;background:#050505"></div>
<div class="a" style="left:914.8px;top:200.8px;width:5.5px;height:8.2px;background:#e0e0e0"></div>
<div class="a" style="left:973.9px;top:198px;width:16.6px;height:12.5px;background:#030303"></div>
<div class="t" style="left:978.5px;top:201px;font-size:6.6px;color:#dedede;transform:scaleX(0.9)">14</div>
<!-- ===== STATUS BAR ===== -->
<div class="a" style="left:0;top:542px;width:174px;height:4px;background:#2e2e2e"></div>
<div class="a" style="left:0;top:546px;width:1000px;height:2px;background:#0f0f0f"></div>
<div class="a" style="left:0;top:548px;width:1000px;height:12px;background:#2a2a2a"></div>
<div class="t" style="left:2px;top:551.8px;font-size:6.6px;color:#dadada;transform:scaleX(0.9)">25.1 fps&nbsp; 1920x1080[50%]&nbsp; H.264</div>
<div class="a" style="left:92px;top:549px;width:1px;height:11px;background:#3a3a3a"></div>
<div class="t" style="left:99.5px;top:551.8px;font-size:6.6px;color:#dadada;transform:scaleX(0.9)">Ready</div>
<div class="a" style="left:834px;top:549px;width:1px;height:11px;background:#3a3a3a"></div>
<div class="t" style="left:863px;top:551px;font-size:6.6px;color:#dedede;transform:scaleX(0.9)">Frame: 64</div>
<div class="a" style="left:891px;top:550px;width:8.5px;height:8px;background:#1c76d8"></div>
<div class="t" style="left:892.8px;top:551px;font-size:6.6px;font-weight:bold;color:#f0f0f0">P</div>
<div class="a" style="left:904px;top:549px;width:1px;height:11px;background:#3a3a3a"></div>
<div class="a" style="left:908px;top:550px;width:14px;height:8px;background:#1c76d8"></div>
<div class="t" style="left:909.3px;top:551.5px;font-size:5.6px;font-weight:bold;color:#143a70;transform:scaleX(0.88)">GPU</div>
<div class="a" style="left:926px;top:549px;width:1px;height:11px;background:#3a3a3a"></div>
<div class="a" style="left:939px;top:550.5px;width:49px;height:7.5px;background:#bc1392"></div>
<div class="a" style="left:988px;top:550.5px;width:3px;height:7.5px;background:#0a0a0a"></div>
<div class="t" style="left:953px;top:551px;font-size:6.3px;font-weight:bold;color:#f4f4f4;transform:scaleX(0.88)">11.72 GB</div>
<svg style="left:993px;top:550px" width="7" height="10"><g fill="#555"><rect x="4" y="1" width="1" height="1"/><rect x="2" y="3" width="1" height="1"/><rect x="4" y="3" width="1" height="1"/><rect x="0" y="5" width="1" height="1"/><rect x="2" y="5" width="1" height="1"/><rect x="4" y="5" width="1" height="1"/><rect x="0" y="7" width="1" height="1"/><rect x="2" y="7" width="1" height="1"/><rect x="4" y="7" width="1" height="1"/></g></svg>

</body></html>
